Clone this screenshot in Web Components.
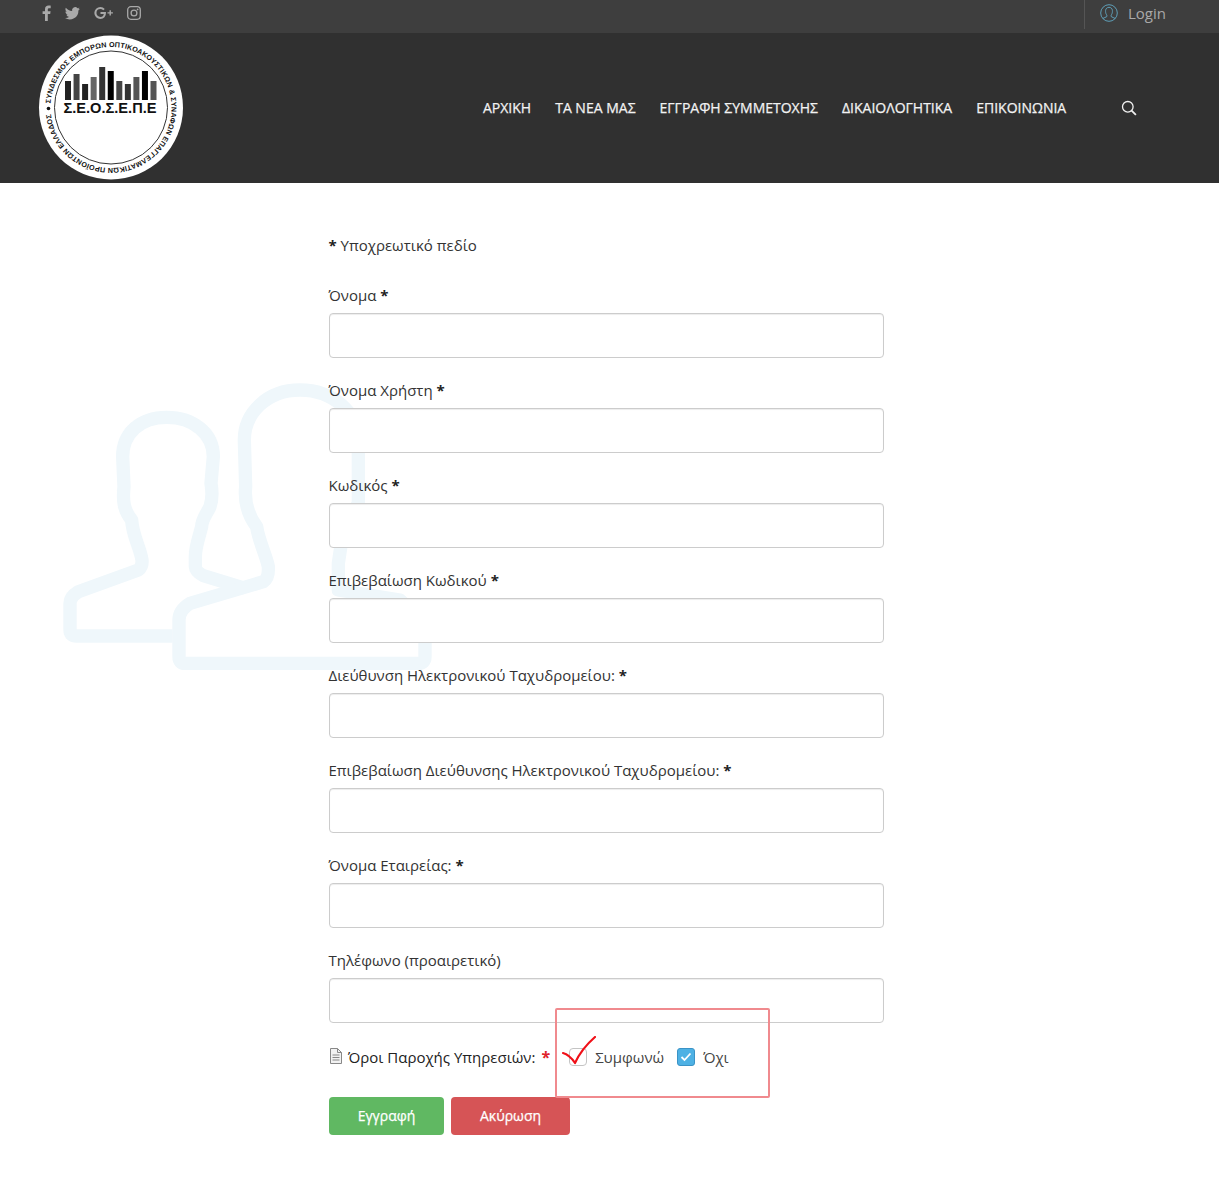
<!DOCTYPE html>
<html lang="el">
<head>
<meta charset="utf-8">
<title>Εγγραφή</title>
<style>
  html, body { margin: 0; padding: 0; background: #fff; }
  body { font-family: "Open Sans", "Noto Sans", sans-serif; height: 1204px; overflow: hidden; }
</style>
</head>
<body>
<se-topbar></se-topbar>
<se-header></se-header>
<se-page>
  <se-field label="Όνομα" req></se-field>
  <se-field label="Όνομα Χρήστη" req></se-field>
  <se-field label="Κωδικός" req></se-field>
  <se-field label="Επιβεβαίωση Κωδικού" req></se-field>
  <se-field label="Διεύθυνση Ηλεκτρονικού Ταχυδρομείου:" req></se-field>
  <se-field label="Επιβεβαίωση Διεύθυνσης Ηλεκτρονικού Ταχυδρομείου:" req></se-field>
  <se-field label="Όνομα Εταιρείας:" req></se-field>
  <se-field label="Τηλέφωνο (προαιρετικό)"></se-field>
  <se-terms></se-terms>
</se-page>

<script>
(function() {

// top strip with the social icons and login
class SeTopbar extends HTMLElement {
  constructor() {
    super();
    let root = this.attachShadow({mode: 'open'});
    root.innerHTML = `<style>
      :host { display: flex; height: 33px; background: #3e3e3e; justify-content: space-between; color: #a9a9a9; }
      .social { display: flex; align-items: center; gap: 13px; padding: 0 0 7px 42px; }
      svg { display: block; fill: #a9a9a9; }
      .gplus { margin: 0 1px 0 -1px; }
      .login { display: flex; align-items: center; gap: 10px; width: 135px; height: 29px; box-sizing: border-box;
        padding: 0 0 3px 15px; border-left: 1px solid #555; font-size: 15px; color: #a9a9a9; }
    </style>
    <div class="social">
      <svg width="10" height="16" viewBox="0 0 10 16"><path d="M3 16V9H.6V6.2H3V4.2C3 1.8 4.4.6 6.5.6c1 0 1.900.1 2.200.1V3.200H7.200C6 3.200 5.800 3.800 5.800 4.600V6.200h2.800L8.200 9H5.800v7z"/></svg>
      <svg width="15" height="16" viewBox="0 0 16 16"><path d="M15.800 3.400c-.6.3-1.200.4-1.900.5.700-.4 1.200-1 1.400-1.800-.6.400-1.300.6-2 .8a3.300 3.300 0 0 0-5.700 3C4.900 5.800 2.500 4.500.9 2.500c-.9 1.500-.4 3.400 1 4.400-.5 0-1-.2-1.500-.4 0 1.600 1.100 3 2.600 3.300-.5.100-1 .1-1.500 0 .4 1.300 1.600 2.200 3.100 2.300A6.600 6.600 0 0 1 0 13.400a9.300 9.300 0 0 0 14.300-8.200c.6-.5 1.100-1.100 1.500-1.800z"/></svg>
      <svg class="gplus" width="21" height="16" viewBox="0 0 21 16"><path d="M12 4.600A5 5 0 0 0 8.400 3 5 5 0 1 0 8.400 13c2.800 0 4.500-1.900 4.500-5H8.500" fill="none" stroke="#a9a9a9" stroke-width="2.100"/><path d="M15.500 7.200h2v-2h1.400v2h2v1.400h-2v2h-1.400v-2h-2z"/></svg>
      <svg width="14" height="14" viewBox="0 0 14 14"><rect x=".7" y=".7" width="12.600" height="12.600" rx="3.200" fill="none" stroke="#a9a9a9" stroke-width="1.300"/><circle cx="7" cy="7" r="2.900" fill="none" stroke="#a9a9a9" stroke-width="1.300"/><circle cx="10.600" cy="3.400" r=".9"/></svg>
    </div>
    <div class="login">
      <svg width="18" height="18" viewBox="0 0 18 18" style="fill:none;stroke:#5f9fb8;stroke-width:1"><circle cx="9" cy="9" r="8.300"/><path d="M2.800 14.500c1.200-.8 3-1.200 3.900-1.800.4-.6.300-1.300-.2-2C5.700 9.500 5.500 8 5.600 6.400 5.800 4.500 7.200 3.300 9 3.300s3.200 1.200 3.400 3.100c.1 1.600-.1 3.100-.9 4.300-.5.700-.6 1.400-.2 2 .9.600 2.700 1 3.900 1.800"/></svg>
      <span>Login</span>
    </div>`;
  }
}
customElements.define('se-topbar', SeTopbar);

// round association logo
class SeLogo extends HTMLElement {
  constructor() {
    super();
    let root = this.attachShadow({mode: 'open'});
    // top of each bar and its colour, all bars stand on y=100
    let bars = [[81,'#222'],[74,'#444'],[84,'#222'],[77,'#666'],[67,'#333'],[71,'#000'],[81,'#444'],[84,'#333'],[77,'#555'],[71,'#000'],[81,'#555']];
    let rects = bars.map((b, i) => `<rect x="${65 + i * 8.550}" y="${b[0]}" width="6" height="${100 - b[0]}" fill="${b[1]}"/>`).join('');
    root.innerHTML = `<style>
      :host { display: block; width: 146px; height: 146px; }
      svg { display: block; }
      text { font-family: "Liberation Sans", Arial, sans-serif; font-weight: 700; fill: #111; }
    </style>
    <svg width="146" height="146" viewBox="37 35 146 146">
      <circle cx="111" cy="107.500" r="72" fill="#fff"/>
      <circle cx="111" cy="107.500" r="56.500" fill="none" stroke="#333" stroke-width="1"/>
      <path id="ring" d="M50.500 107.500A60.500 60.500 0 1 1 171.500 107.500A60.500 60.500 0 1 1 50.500 107.500" fill="none"/>
      <text font-size="7.200"><textPath href="#ring" startOffset="4" textLength="369" lengthAdjust="spacing">ΣΥΝΔΕΣΜΟΣ ΕΜΠΟΡΩΝ ΟΠΤΙΚΟΑΚΟΥΣΤΙΚΩΝ &amp; ΣΥΝΑΦΩΝ ΕΠΑΓΓΕΛΜΑΤΙΚΩΝ ΠΡΟΪΟΝΤΩΝ ΕΛΛΑΔΟΣ</textPath></text>
      <circle cx="48.500" cy="108.500" r="1.800" fill="#111"/>
      ${rects}
      <text x="110" y="112.500" font-size="15" text-anchor="middle" textLength="93" lengthAdjust="spacingAndGlyphs">Σ.Ε.Ο.Σ.Ε.Π.Ε</text>
    </svg>`;
  }
}
customElements.define('se-logo', SeLogo);

// dark header: logo, menu, search
class SeHeader extends HTMLElement {
  constructor() {
    super();
    let root = this.attachShadow({mode: 'open'});
    let items = ['ΑΡΧΙΚΗ', 'ΤΑ ΝΕΑ ΜΑΣ', 'ΕΓΓΡΑΦΗ ΣΥΜΜΕΤΟΧΗΣ', 'ΔΙΚΑΙΟΛΟΓΗΤΙΚΑ', 'ΕΠΙΚΟΙΝΩΝΙΑ'];
    root.innerHTML = `<style>
      :host { display: flex; align-items: center; height: 150px; background: #303030; padding-left: 37px; box-sizing: border-box; }
      nav { display: flex; gap: 24px; margin-left: 300px; padding-bottom: 2px; font-size: 14px; font-weight: 400; color: #f2f2f2; -webkit-text-stroke: .25px #f2f2f2; }
      svg { display: block; margin-left: 55px; }
    </style>
    <se-logo></se-logo>
    <nav>${items.map(t => `<span>${t}</span>`).join('')}</nav>
    <svg width="16" height="16" viewBox="0 0 16 16" fill="none" stroke="#f0f0f0" stroke-width="1.300"><circle cx="6.800" cy="6.800" r="5.300"/><path d="M10.600 10.600l4.300 4.300" stroke-width="1.800"/></svg>`;
  }
}
customElements.define('se-header', SeHeader);

// page body: watermark behind the form column
class SePage extends HTMLElement {
  constructor() {
    super();
    let root = this.attachShadow({mode: 'open'});
    root.innerHTML = `<style>
      :host { display: block; position: relative; }
      .mark { position: absolute; left: 50px; top: 187px; z-index: 0; }
      .form { position: relative; z-index: 1; width: 555px; margin-left: 329px; padding-top: 52px; }
      .req { font-size: 15px; line-height: 21px; color: #333; margin: 0 0 29px -.5px; }
      b { font-weight: 700; color: #222; }
    </style>
    <svg class="mark" width="400" height="310" viewBox="0 0 1200 930" fill="none" stroke="#eff7fb" stroke-width="40" stroke-linejoin="round">
      <path d="M368 798H80Q60 798 60 780V700Q60 680 85 665L265 600Q278 590 276 570C270 530 248 500 245 450C220 420 218 390 222 350L218 260C218 190 270 142 350 142C430 142 490 190 490 260L483 340Q490 380 480 410C465 440 455 450 455 470C445 510 436 530 436 560V590Q437 605 460 617L585 655"/>
      <path d="M1125 820V860Q1125 880 1105 880H405Q387 880 387 860V750Q387 720 420 700L640 635Q657 625 655 590C650 560 625 510 620 470C590 430 583 390 587 350L583 210C583 130 650 60 750 60C850 60 925 130 925 210V400L880 480L865 580V660L1050 690L1125 760V820"/>
    </svg>
    <div class="form">
      <div class="req"><b>*</b> Υποχρεωτικό πεδίο</div>
      <slot></slot>
    </div>`;
  }
}
customElements.define('se-page', SePage);

// one label + text input
class SeField extends HTMLElement {
  constructor() {
    super();
    let root = this.attachShadow({mode: 'open'});
    root.innerHTML = `<style>
      :host { display: block; height: 95px; font-size: 15px; color: #333; }
      label { display: block; line-height: 21px; height: 21px; margin: 0 0 7px -.5px; }
      b { font-weight: 700; color: #222; }
      input { display: block; width: 100%; height: 45px; box-sizing: border-box; background: #fff;
        border: 1px solid #ccc; border-radius: 4px; box-shadow: inset 0 1px 1px rgba(0,0,0,.075); }
    </style>
    <label></label><input type="text">`;
    this.$label = root.querySelector('label');
  }
  connectedCallback() {
    this.$label.textContent = this.getAttribute('label');
    if (this.hasAttribute('req')) {
      this.$label.insertAdjacentHTML('beforeend', ' <b>*</b>');
    }
  }
}
customElements.define('se-field', SeField);

// terms row, buttons and the red annotation drawn over them
class SeTerms extends HTMLElement {
  constructor() {
    super();
    let root = this.attachShadow({mode: 'open'});
    root.innerHTML = `<style>
      :host { display: block; position: relative; margin-top: -5px; font-size: 15px; color: #222; }
      .row { display: flex; align-items: center; height: 34px; }
      .doc { margin-right: 5px; margin-top: -2px; }
      .star { color: #e0222a; font-weight: 700; font-size: 16px; margin-left: 6px; }
      .box { width: 18px; height: 18px; box-sizing: border-box; border-radius: 4px; border: 1px solid #c4c4c4; margin-left: 19px; margin-right: 8px; background: #fff; }
      .on { display: flex; align-items: center; justify-content: center; width: 18px; height: 18px; border-radius: 3px; border: 1px solid #3b93c6; background: #4eb1e4; box-sizing: border-box; margin: 0 8px 0 13px; }
      .txt { color: #444; }
      .btns { display: flex; gap: 7px; margin-top: 23px; }
      .btn { height: 38px; box-sizing: border-box; padding-bottom: 2px; border-radius: 4px; color: #fff; font-size: 14px; font-weight: 400; -webkit-text-stroke: .25px #fff; display: flex; align-items: center; justify-content: center; }
      .ok { width: 115px; background: #60b862; }
      .no { width: 119px; background: #d65456; }
      .note { position: absolute; left: 226px; top: -32px; width: 215px; height: 90px; box-sizing: border-box; border: 2px solid #f08a8e; border-radius: 2px; }
      .tick { position: absolute; left: 233px; top: -4px; }
    </style>
    <div class="row">
      <svg class="doc" width="14" height="16" viewBox="0 0 14 16" fill="none" stroke="#888"><path d="M1.500.5h7l4 4v11h-11z" fill="#f2f2f2"/><path d="M8.500.5v4h4M3.500 7h7M3.500 9.500h7M3.500 12h7"/></svg>
      <span>Όροι Παροχής Υπηρεσιών:</span><span class="star">*</span>
      <span class="box"></span><span class="txt">Συμφωνώ</span>
      <span class="on"><svg width="12" height="10" viewBox="0 0 12 10" fill="none" stroke="#fff" stroke-width="1.800"><path d="M1.500 5l3 3 6-6.500"/></svg></span><span class="txt">Όχι</span>
    </div>
    <div class="btns"><div class="btn ok">Εγγραφή</div><div class="btn no">Ακύρωση</div></div>
    <div class="note"></div>
    <svg class="tick" width="34" height="30" viewBox="0 0 34 30" fill="none" stroke="#f01018" stroke-width="2.200" stroke-linecap="round" stroke-linejoin="round"><path d="M1 17C5 18 9 21 13 27C18 16 25 8 33 1"/></svg>`;
  }
}
customElements.define('se-terms', SeTerms);

}());
</script>
</body>
</html>
